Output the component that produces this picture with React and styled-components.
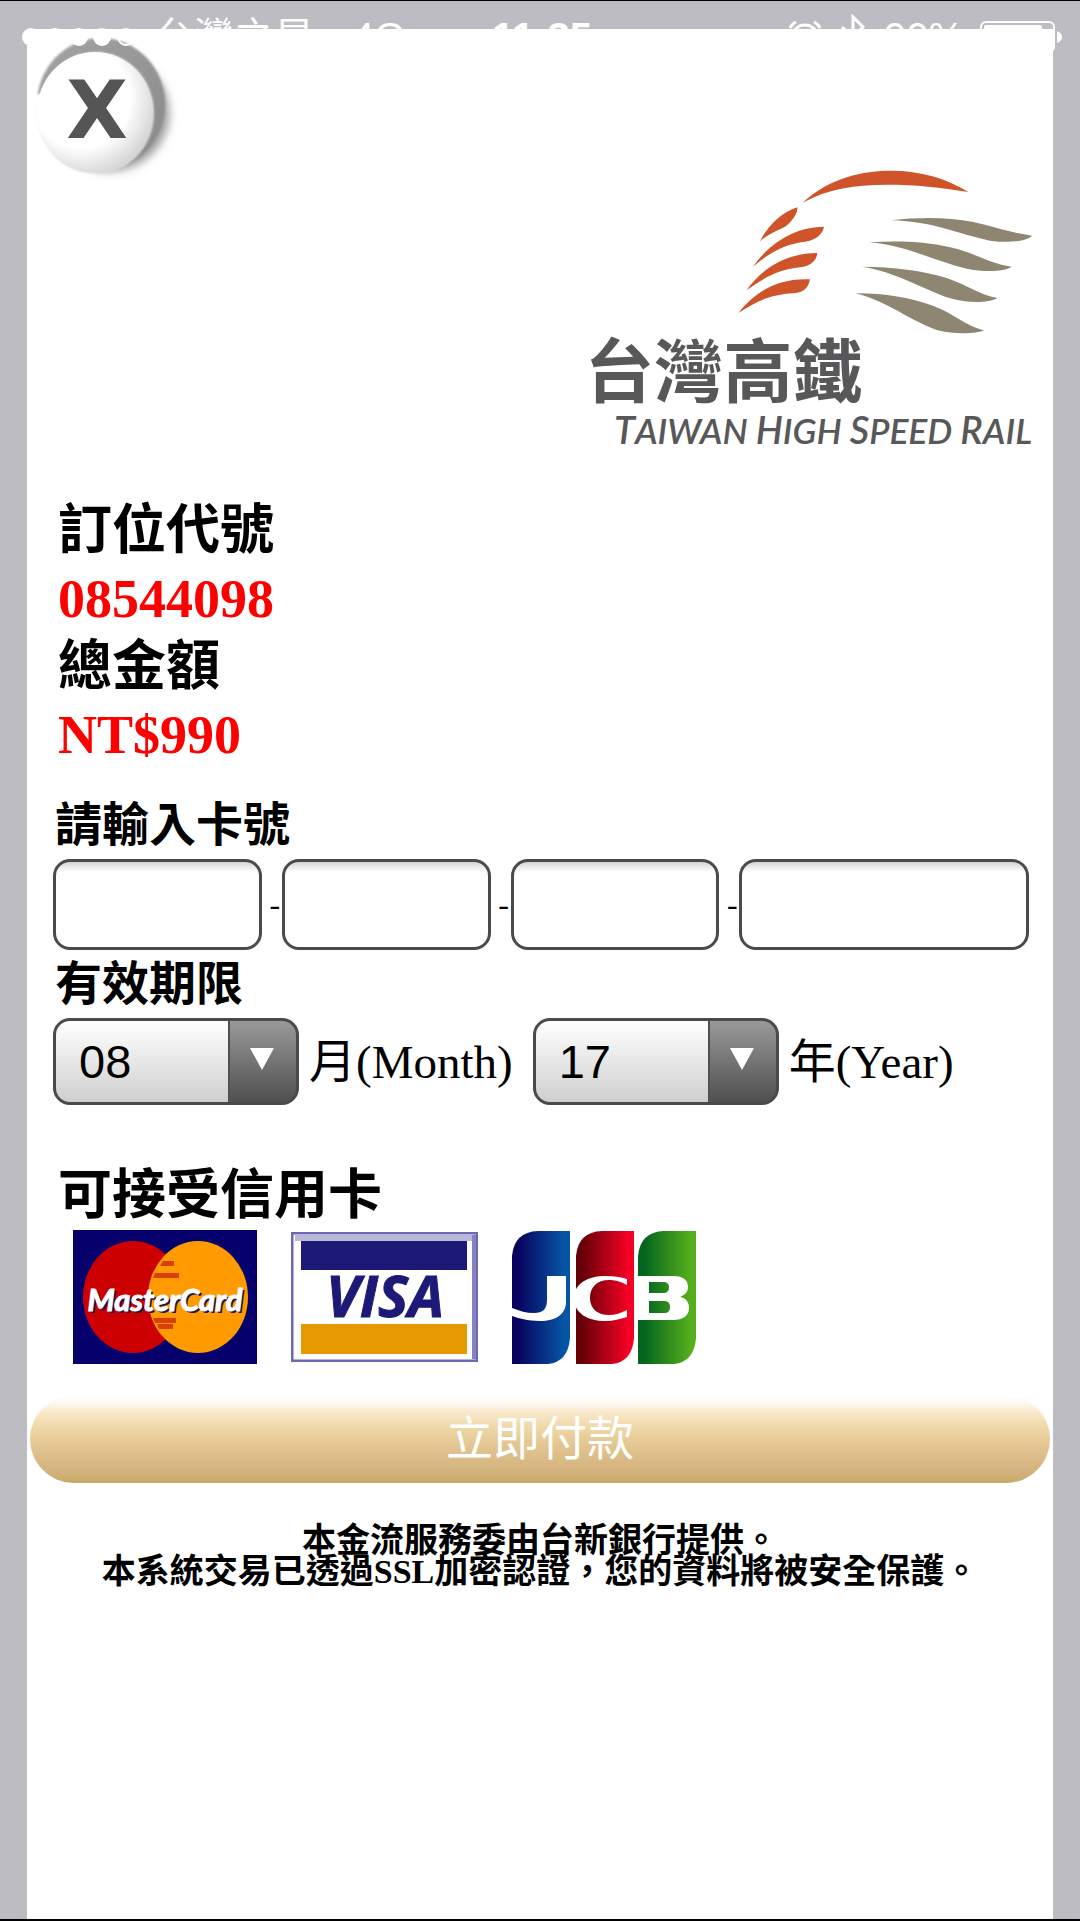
import React, { useState } from 'react';
import styled, { createGlobalStyle } from 'styled-components';

const serif = '"Liberation Serif", "Noto Sans CJK TC", serif';
const sans = '"Liberation Sans", "Noto Sans CJK TC", sans-serif';

const GlobalStyle = createGlobalStyle`
  *, *::before, *::after { box-sizing: border-box; }
  body {
    margin: 0;
    background: #bdbcc3;
    color: #000;
    font-family: ${serif};
  }
`;

const Screen = styled.div`
  position: relative;
  display: flex;
  min-height: 100vh;
  padding: 28px 27px 0;
  border-top: 1px solid #000;
  border-bottom: 2px solid #000;
`;

const StatusBar = styled.header`
  position: absolute;
  top: 13px;
  left: 22px;
  right: 18px;
  display: grid;
  grid-template-columns: 1fr auto 1fr;
  align-items: center;
  height: 44px;
  color: #fff;
  font-family: ${sans};
  font-size: 40px;
  line-height: 44px;
  pointer-events: none;
`;

const StatusGroup = styled.div`
  display: flex;
  align-items: center;
  justify-content: ${(p) => (p.$end ? 'flex-end' : 'flex-start')};
  gap: ${(p) => p.$gap}px;
`;

const Signal = styled.svg`
  display: block;
`;

const Clock = styled.time`
  font-weight: 700;
`;

const Panel = styled.main`
  flex: 1;
  display: flex;
  flex-direction: column;
  min-width: 0;
  background: #fff;
`;

const TopRow = styled.div`
  display: flex;
  justify-content: space-between;
  align-items: flex-start;
  padding: 0 3px 0 5px;
`;

const CloseButton = styled.button`
  padding: 0;
  border: 0;
  background: none;
  cursor: pointer;
  svg { display: block; }
`;

const Logo = styled.svg`
  display: block;
  width: 480px;
  height: 310px;
  margin-top: 121px;
`;

const Summary = styled.dl`
  margin: 37px 0 0;
  padding: 0 31px;
  font-size: 54px;
  line-height: 68px;
`;

const Term = styled.dt`
  font-weight: 700;
`;

const Value = styled.dd`
  margin: 0;
  color: #f00;
  font-weight: 700;
`;

const Form = styled.form`
  display: flex;
  flex-direction: column;
  padding-top: 22px;
`;

const FieldSet = styled.fieldset`
  min-width: 0;
  margin: 0;
  padding: 0 24px 0 26px;
  border: 0;
`;

const FieldTitle = styled.legend`
  padding: 0 2px;
  font-size: 47px;
  font-weight: 700;
  line-height: 68px;
`;

const CardRow = styled.div`
  display: grid;
  grid-template-columns: 209fr 20px 209fr 20px 209fr 20px 290fr;
  align-items: center;
`;

const CardInput = styled.input`
  width: 100%;
  min-width: 0;
  height: 91px;
  padding: 0 20px;
  border: 3px solid #4a4a4a;
  border-radius: 17px;
  outline: 0;
  background: linear-gradient(#d4d4d4, #fff 10px);
  font-family: ${sans};
  font-size: 47px;
`;

const Dash = styled.span`
  padding-left: 6px;
  font-size: 32px;
  text-align: center;
`;

const ExpiryRow = styled.div`
  display: flex;
  align-items: center;
`;

const SelectBox = styled.span`
  position: relative;
  display: block;
  width: 246px;
`;

const Select = styled.select`
  display: block;
  width: 100%;
  height: 87px;
  padding: 0 80px 0 23px;
  appearance: none;
  border: 3px solid #4a4a4a;
  border-radius: 17px;
  outline: 0;
  background:
    linear-gradient(#999, #505050) right / 66px 100% no-repeat,
    linear-gradient(#505050, #505050) right / 68px 100% no-repeat,
    linear-gradient(#fff, #cfcfcf);
  color: #000;
  font-family: ${sans};
  font-size: 47px;
`;

const Arrow = styled.svg`
  position: absolute;
  top: 30px;
  right: 25px;
  pointer-events: none;
`;

const Unit = styled.label`
  padding: 0 20px 0 10px;
  font-size: 47px;
  line-height: 68px;
`;

const Accepted = styled.section`
  padding: 0 31px;
  margin-top: 57px;
`;

const AcceptedTitle = styled.h2`
  margin: 0;
  font-size: 54px;
  font-weight: 700;
  line-height: 68px;
`;

const Brands = styled.div`
  display: flex;
  align-items: center;
  gap: 34px;
  padding: 0 15px;
  svg { display: block; }
`;

const PayButton = styled.button`
  height: 88px;
  margin: 31px 3px 0;
  padding: 0;
  border: 0;
  border-radius: 44px;
  background: linear-gradient(#fff 0%, #fefbf6 8%, #fae8ca 20%, #efd8a9 36%, #e4c793 55%, #d2b27c 88%, #c9a864 100%);
  color: #fff;
  font-family: ${sans};
  font-size: 47px;
  font-weight: 400;
  line-height: 88px;
  cursor: pointer;
`;

const Notice = styled.p`
  margin: 42px 0 0;
  font-size: 34px;
  font-weight: 700;
  line-height: 31px;
  text-align: center;
`;

function CloseIcon() {
  return (
    <svg width="150" height="152" viewBox="32 29 150 152" aria-hidden="true">
      <defs>
        <linearGradient id="rim" x1="0" y1="0" x2="1" y2="1">
          <stop offset="0" stopColor="#a5a5a5" />
          <stop offset="1" stopColor="#888" />
        </linearGradient>
        <radialGradient id="face" cx="0.38" cy="0.38" r="0.68">
          <stop offset="0.62" stopColor="#fff" />
          <stop offset="1" stopColor="#d2d2d2" />
        </radialGradient>
        <filter id="shade" x="-20%" y="-20%" width="140%" height="140%">
          <feGaussianBlur stdDeviation="5" />
        </filter>
        <filter id="edge" x="-20%" y="-20%" width="140%" height="140%">
          <feGaussianBlur stdDeviation="1" />
        </filter>
      </defs>
      <ellipse cx="109" cy="113" rx="60" ry="58" fill="#999" filter="url(#shade)" />
      <ellipse cx="101" cy="104" rx="64" ry="66" fill="url(#rim)" filter="url(#edge)" />
      <path d="M28 94H70L96 176H28Z" fill="#fff" filter="url(#edge)" />
      <ellipse cx="96" cy="113" rx="58" ry="61" fill="#ddd" filter="url(#edge)" />
      <ellipse cx="95" cy="112" rx="58" ry="60" fill="url(#face)" />
      <text x="97" y="138" textAnchor="middle" fontFamily="DejaVu Sans, sans-serif" fontWeight="700" fontSize="80" fill="#555">X</text>
    </svg>
  );
}

function RailLogo() {
  return (
    <Logo viewBox="0 0 1440 930" role="img" aria-label="台灣高鐵 Taiwan High Speed Rail">
      <g fill="#cf5429">
        <path d="M698 158C780 82 880 62 965 62C1050 62 1130 85 1195 126C1110 112 1040 104 950 104C850 104 770 118 698 158Z" />
        <path d="M570 274C590 234 630 188 682 172C684 188 668 214 645 230C612 246 592 254 570 274Z" />
        <path d="M549 350C590 292 660 232 762 230C758 252 738 270 705 275C640 282 594 312 549 350Z" />
        <path d="M530 420C574 360 640 310 742 309C740 332 722 348 690 352C622 358 580 386 530 420Z" />
        <path d="M505 489C550 434 612 384 720 388C716 412 702 428 670 430C600 434 558 454 505 489Z" />
      </g>
      <g fill="#8f8672">
        <path d="M965 211C1040 202 1130 200 1210 216C1280 232 1330 250 1386 257C1370 274 1320 280 1260 272C1160 252 1090 214 965 211Z" />
        <path d="M897 277C1000 270 1090 276 1165 298C1230 318 1270 343 1325 350C1302 366 1240 366 1190 356C1090 332 1010 286 897 277Z" />
        <path d="M876 350C970 350 1060 362 1130 384C1190 404 1228 434 1282 444C1256 460 1190 460 1140 445C1050 414 980 366 876 350Z" />
        <path d="M857 430C950 430 1020 444 1080 464C1150 488 1180 524 1242 541C1220 552 1150 554 1100 540C1020 512 960 458 857 430Z" />
      </g>
      <g fill="#58585a">
        <text x="44" y="742" fontFamily="Noto Sans CJK TC, sans-serif" fontWeight="700" fontSize="208">台灣高鐵</text>
        <text x="132" y="882" fontFamily="Lato, sans-serif" fontStyle="italic" fontWeight="600" fontSize="106">
          <tspan fontSize="114">T</tspan>AIWAN <tspan fontSize="114">H</tspan>IGH <tspan fontSize="114">S</tspan>PEED <tspan fontSize="114">R</tspan>AIL
        </text>
      </g>
    </Logo>
  );
}

function MasterCard() {
  return (
    <svg width="184" height="134" viewBox="0 0 184 134" role="img" aria-label="MasterCard">
      <rect width="184" height="134" fill="#05006c" />
      <ellipse cx="60" cy="67" rx="50" ry="56" fill="#cc0000" />
      <ellipse cx="125" cy="67" rx="50" ry="56" fill="#ff9a00" />
      <path d="M90 31h11v5H87zM82 43h24v5H80zM80 88h23v5H82zM86 99h14v-5H84z" fill="#d8400a" />
      <path d="M84 37h18v6H82zM80 48h20v6H79zM80 82h20v6H80z" fill="#ff9a00" />
      <g fontFamily="Lato, sans-serif" fontWeight="700" fontStyle="italic" fontSize="31" textAnchor="middle">
        <text x="94" y="83" fill="#1b1450">MasterCard</text>
        <text x="92" y="81" fill="#fff" stroke="#fff">MasterCard</text>
      </g>
    </svg>
  );
}

function Visa() {
  return (
    <svg width="187" height="130" viewBox="0 0 187 130" role="img" aria-label="VISA">
      <rect x="1" y="1" width="185" height="128" fill="#fff" stroke="#6c69b4" strokeWidth="3" />
      <rect x="4" y="3" width="179" height="6" fill="#b9b8d8" />
      <rect x="181" y="3" width="4" height="124" fill="#8583c0" />
      <rect x="10" y="9" width="166" height="29" fill="#1c1a76" />
      <rect x="10" y="92" width="166" height="30" fill="#e69900" />
      <text x="94" y="85" textAnchor="middle" fontFamily="Open Sans, sans-serif" fontWeight="700" fontStyle="italic" fontSize="57" fill="#1c1a76" stroke="#1c1a76">VISA</text>
    </svg>
  );
}

const jcbBars = [
  { id: 'jcbBlue', x: 0, from: '#08035e', to: '#0655a5' },
  { id: 'jcbRed', x: 64, from: '#650007', to: '#f50025' },
  { id: 'jcbGreen', x: 126, from: '#04641f', to: '#55ae1c' },
];

function Jcb() {
  return (
    <svg width="186" height="134" viewBox="0 0 186 134" role="img" aria-label="JCB">
      <defs>
        {jcbBars.map((b) => (
          <linearGradient id={b.id} key={b.id}>
            <stop offset="0.1" stopColor={b.from} />
            <stop offset="0.9" stopColor={b.to} />
          </linearGradient>
        ))}
      </defs>
      {jcbBars.map((b) => (
        <path key={b.id} transform={`translate(${b.x} 0)`} d="M0 134V26Q2 2 26 1H58V108Q56 132 36 134Z" fill={`url(#${b.id})`} />
      ))}
      <g fill="#fff">
        <path d="M35 46H54V72C54 84 44 91 28 91C16 91 6 88 0 86V78C8 81 14 83 22 83C31 83 35 79 35 70Z" />
        <path d="M115 49V55C108 51 102 50 97 50C85 50 78 57 78 68C78 79 86 85 97 85C103 85 109 83 115 80V87C108 89 101 91 94 91C75 91 62 83 62 68C62 54 75 46 94 46C102 46 109 47 115 49Z" />
        <path fillRule="evenodd" d="M126 46H162C171 46 176 50 176 57C176 62 173 65 168 67C174 68 177 72 177 78C177 86 171 90 161 90H126ZM137 52V63H151C155 63 157 61 157 57C157 54 155 52 151 52ZM137 71V83H152C156 83 158 81 158 77C158 73 156 71 152 71Z" />
      </g>
    </svg>
  );
}

function SelectField({ id, options, value, onChange }) {
  return (
    <SelectBox>
      <Select id={id} value={value} onChange={(e) => onChange(e.target.value)}>
        {options.map((o) => <option key={o}>{o}</option>)}
      </Select>
      <Arrow width="24" height="22" viewBox="0 0 24 22" aria-hidden="true">
        <path d="M0 0H24L12 22Z" fill="#fff" />
      </Arrow>
    </SelectBox>
  );
}

const months = Array.from({ length: 12 }, (_, i) => String(i + 1).padStart(2, '0'));
const years = Array.from({ length: 10 }, (_, i) => String(i + 16));

export default function App() {
  const [month, setMonth] = useState('08');
  const [year, setYear] = useState('17');

  return (
    <Screen>
      <GlobalStyle />
      <Panel>
        <TopRow>
          <CloseButton type="button" aria-label="X"><CloseIcon /></CloseButton>
          <RailLogo />
        </TopRow>
        <Summary>
          <Term>訂位代號</Term>
          <Value>08544098</Value>
          <Term>總金額</Term>
          <Value>NT$990</Value>
        </Summary>
        <Form onSubmit={(e) => e.preventDefault()}>
          <FieldSet>
            <FieldTitle>請輸入卡號</FieldTitle>
            <CardRow>
              <CardInput aria-label="請輸入卡號 1" inputMode="numeric" maxLength={4} />
              <Dash>-</Dash>
              <CardInput aria-label="請輸入卡號 2" inputMode="numeric" maxLength={4} />
              <Dash>-</Dash>
              <CardInput aria-label="請輸入卡號 3" inputMode="numeric" maxLength={4} />
              <Dash>-</Dash>
              <CardInput aria-label="請輸入卡號 4" inputMode="numeric" maxLength={4} />
            </CardRow>
          </FieldSet>
          <FieldSet>
            <FieldTitle>有效期限</FieldTitle>
            <ExpiryRow>
              <SelectField id="month" options={months} value={month} onChange={setMonth} />
              <Unit htmlFor="month">月(Month)</Unit>
              <SelectField id="year" options={years} value={year} onChange={setYear} />
              <Unit htmlFor="year">年(Year)</Unit>
            </ExpiryRow>
          </FieldSet>
          <Accepted>
            <AcceptedTitle>可接受信用卡</AcceptedTitle>
            <Brands>
              <MasterCard />
              <Visa />
              <Jcb />
            </Brands>
          </Accepted>
          <PayButton type="submit">立即付款</PayButton>
        </Form>
        <Notice>
          本金流服務委由台新銀行提供。<br />
          本系統交易已透過SSL加密認證，您的資料將被安全保護。
        </Notice>
      </Panel>
      <StatusBar>
        <StatusGroup $gap={38}>
          <StatusGroup $gap={18}>
            <Signal width="114" height="20" viewBox="0 0 114 20" aria-hidden="true">
              <g fill="#fff">
                <circle cx="9" cy="10" r="9" />
                <circle cx="33" cy="10" r="9" />
                <circle cx="57" cy="10" r="9" />
                <circle cx="80" cy="10" r="9" />
              </g>
              <circle cx="104" cy="10" r="8" fill="none" stroke="#fff" strokeWidth="2" />
            </Signal>
            <span>台灣之星</span>
          </StatusGroup>
          <span>4G</span>
        </StatusGroup>
        <Clock>11:35</Clock>
        <StatusGroup $end $gap={16}>
          <svg width="34" height="34" viewBox="0 0 34 34" fill="none" stroke="#fff" strokeWidth="3" aria-hidden="true">
            <circle cx="17" cy="18" r="13" />
            <path d="M17 10V19H23M2 8A12 12 0 0 1 8 2M26 2A12 12 0 0 1 32 8" />
          </svg>
          <svg width="30" height="46" viewBox="0 0 30 46" fill="none" stroke="#fff" strokeWidth="3" aria-hidden="true">
            <path d="M4 13L25 33L15 43V3L25 13L4 33" />
          </svg>
          <span>90%</span>
          <svg width="82" height="32" viewBox="0 0 82 32" aria-hidden="true">
            <rect x="1" y="1" width="73" height="30" rx="5" fill="none" stroke="#fff" strokeWidth="2" />
            <rect x="4" y="4" width="58" height="24" rx="2" fill="#fff" />
            <path d="M77 10Q82 12 82 16T77 22Z" fill="#fff" />
          </svg>
        </StatusGroup>
      </StatusBar>
    </Screen>
  );
}
